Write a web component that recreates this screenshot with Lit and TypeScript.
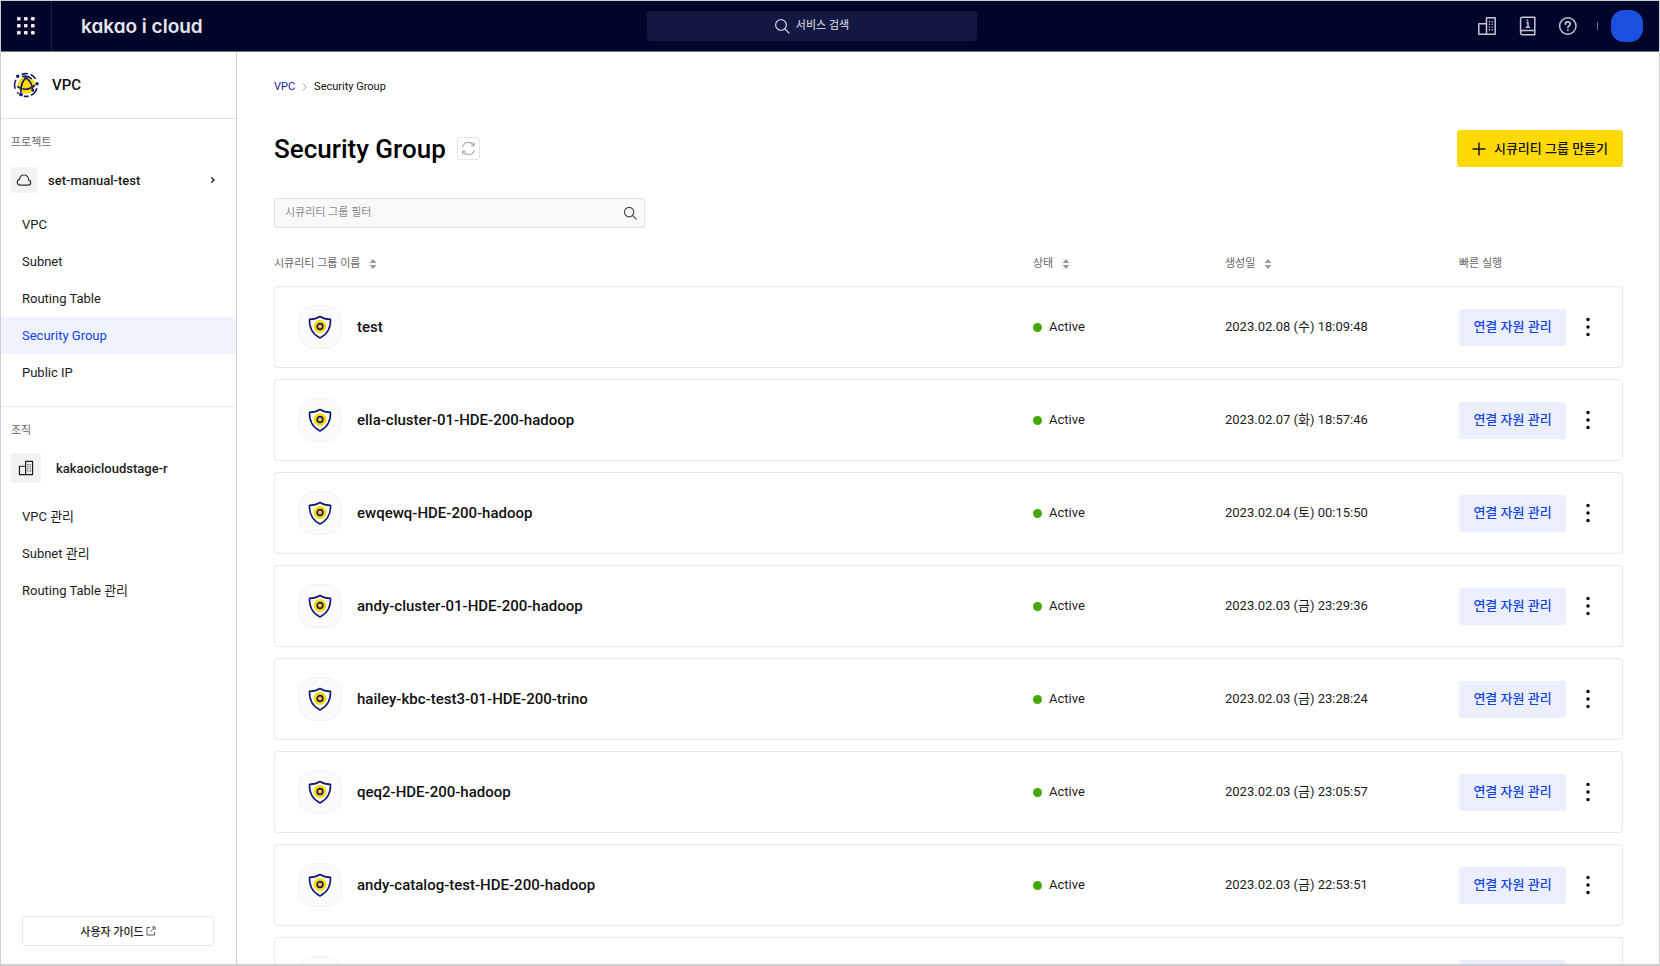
import { LitElement, html, css, svg } from "lit";
import { customElement, property } from "lit/decorators.js";
import { classMap } from "lit/directives/class-map.js";

const reset = css`
  *, *::before, *::after { box-sizing: border-box; }
  button, input { font: inherit; color: inherit; margin: 0; }
  button { border: 0; padding: 0; background: none; cursor: pointer; }
  a { color: inherit; text-decoration: none; }
  svg { display: block; flex: none; }
`;

interface SecurityGroup {
  name: string;
  created: string;
}

const groups: SecurityGroup[] = [
  { name: "test", created: "2023.02.08 (수) 18:09:48" },
  { name: "ella-cluster-01-HDE-200-hadoop", created: "2023.02.07 (화) 18:57:46" },
  { name: "ewqewq-HDE-200-hadoop", created: "2023.02.04 (토) 00:15:50" },
  { name: "andy-cluster-01-HDE-200-hadoop", created: "2023.02.03 (금) 23:29:36" },
  { name: "hailey-kbc-test3-01-HDE-200-trino", created: "2023.02.03 (금) 23:28:24" },
  { name: "qeq2-HDE-200-hadoop", created: "2023.02.03 (금) 23:05:57" },
  { name: "andy-catalog-test-HDE-200-hadoop", created: "2023.02.03 (금) 22:53:51" },
  { name: "", created: "" },
];

const searchIcon = (size: number) => html`
  <svg width=${size} height=${size} viewBox="0 0 16 16" fill="none" stroke="currentColor" stroke-width="1.3" stroke-linecap="round" aria-hidden="true">
    <circle cx="7" cy="7" r="5.4" /><path d="M11 11l4 4" />
  </svg>`;

const buildingIcon = (size: number) => html`
  <svg width=${size} height=${size} viewBox="0 0 20 20" fill="none" stroke="currentColor" stroke-width="1.5" stroke-linejoin="round" aria-hidden="true">
    <path d="M9.5 18.2V1.8h8.7v16.4zM9.5 7.8H1.8v10.4h7.7" />
    <path d="M12.4 5v9.6M15.3 5v9.6" stroke-width="1.2" stroke-dasharray="1.4 1.3" />
  </svg>`;

@customElement("top-bar")
export class TopBar extends LitElement {
  static styles = [reset, css`
    :host {
      display: flex; align-items: center; height: 51px; flex: none;
      background: #000529; border-bottom: 1px solid #77797f; color: #c3c5d3;
    }
    .brand { flex: 1; display: flex; align-items: center; align-self: stretch; }
    .apps { width: 51px; align-self: stretch; display: grid; place-items: center; border-right: 1px solid #1d2240; color: #f2f2f5; }
    .logo { margin-left: 29px; padding-top: 2px; font: 600 19px/24px Inter, sans-serif; font-feature-settings: "cv11"; color: #e6e7ee; }
    .search {
      width: 330px; height: 30px; margin-right: 21px; border-radius: 4px; background: #131842;
      display: flex; align-items: center; justify-content: center; gap: 6px; font-size: 11px; font-weight: 500; line-height: 16px;
    }
    .tools { flex: 1; display: flex; align-items: center; justify-content: flex-end; padding-right: 16px; }
    .tool { width: 20px; height: 20px; margin-right: 20px; display: grid; place-items: center; }
    .bar { width: 1px; height: 8px; margin-right: 13px; background: #71748a; }
    .avatar { width: 32px; height: 32px; border-radius: 13px; background: #1b4fdf; }
  `];

  render() {
    return html`
      <div class="brand">
        <button class="apps" aria-label="서비스 목록">
          <svg width="18" height="18" viewBox="0 0 18 18" fill="currentColor" aria-hidden="true">
            ${[0, 1, 2, 3, 4, 5, 6, 7, 8].map((i) => svg`<rect x=${(i % 3) * 7} y=${Math.floor(i / 3) * 7} width="3.6" height="3.6" rx="0.8" />`)}
          </svg>
        </button>
        <a class="logo" href="#">kakao i cloud</a>
      </div>
      <button class="search">${searchIcon(16)}<span>서비스 검색</span></button>
      <div class="tools">
        <button class="tool" aria-label="조직">${buildingIcon(20)}</button>
        <button class="tool" aria-label="문서">
          <svg width="20" height="20" viewBox="0 0 20 20" fill="none" stroke="currentColor" stroke-width="1.5" stroke-linejoin="round" aria-hidden="true">
            <path d="M17.8 14.5V1.2H5.300A1.7 1.7 0 0 0 3.600 3v14A1.7 1.7 0 0 0 5.300 18.7H17.800v-4.2H5.300A1.7 1.7 0 0 0 3.600 16" />
            <path d="M9.4 6.8h1.6v4.4M8.800 11.3h4.2M10.500 3.6v1.6" />
          </svg>
        </button>
        <button class="tool" aria-label="도움말">
          <svg width="20" height="20" viewBox="0 0 20 20" fill="none" stroke="currentColor" stroke-width="1.5" stroke-linecap="round" aria-hidden="true">
            <circle cx="10.8" cy="10" r="8.2" />
            <path d="M8.500 8.1c0-3 4.7-2.8 4.7-.2 0 1.7-2.3 1.7-2.3 3.6M10.900 14v.2" stroke-width="1.7" />
          </svg>
        </button>
        <span class="bar"></span>
        <button class="avatar" aria-label="내 계정"></button>
      </div>`;
  }
}

@customElement("side-nav")
export class SideNav extends LitElement {
  @property() current = "Security Group";

  static styles = [reset, css`
    :host {
      width: 236px; flex: none; display: flex; flex-direction: column;
      border-right: 1px solid #cfcfcf; font-size: 13px; color: #1c1c1c;
    }
    .head { display: flex; align-items: center; gap: 13px; height: 67px; padding-left: 12px; border-bottom: 1px solid #e3e3e3; font-size: 15px; font-weight: 500; color: #111; }
    .group { padding: 14px 0 15px; }
    .group + .group { border-top: 1px solid #ececec; }
    .label { margin: 0; padding-left: 10px; font-size: 11px; font-weight: 400; line-height: 20px; color: #666; }
    .scope { width: 100%; display: flex; align-items: center; gap: 11px; margin: 14px 0 13px; padding: 0 20px 0 10px; font-weight: 500; text-align: left; }
    .scope.org { gap: 15px; margin: 12px 0 15px; }
    .name { flex: 1; }
    .tile { width: 26px; height: 26px; border-radius: 3px; background: #f2f2f2; display: grid; place-items: center; }
    .org .tile { width: 30px; height: 30px; }
    .list { list-style: none; margin: 0; padding: 0; }
    .item { display: block; padding-left: 21px; line-height: 37px; }
    .item.on { background: #eef3fe; color: #1540ec; }
    .guide {
      display: flex; align-items: center; justify-content: center; gap: 2px; height: 30px; margin: auto 22px 18px 21px;
      border: 1px solid #e6e6e6; border-radius: 3px; font-size: 11px; font-weight: 500;
    }
  `];

  private menu(items: string[]) {
    return html`<ul class="list">${items.map((t) => html`
      <li><a href="#" class=${classMap({ item: true, on: t === this.current })}>${t}</a></li>`)}</ul>`;
  }

  render() {
    return html`
      <div class="head">
        <svg width="26" height="26" viewBox="0 0 26 26" fill="none" stroke="#121a70" stroke-width="1.6" aria-hidden="true">
          <circle cx="13.4" cy="13.2" r="8.6" fill="#ffd900" stroke="none" />
          <path d="M8.6 2.4A11.4 11.4 0 0 1 15 1.8M17.600 2.500a11.4 11.4 0 0 1 5 4.400M2.9 7.8a11.4 11.4 0 0 0-.7 9M4.3 20.3l1.2 1.4M10.8 24.2a11.4 11.4 0 0 0 4.8-.1M18 23.3a11.4 11.4 0 0 0 5.8-7.1" />
          <path d="M12.6 6.200C9.400 9.200 7.700 13.6 7.8 20.4M13.3 6.200c3.4 2.4 6.100 6.800 6.400 12.300M4.200 14.400c4.500 3.800 12.200 4.200 17.800-1.200M9 4.600C12.500 3.600 16 4.400 19 7" />
          <g fill="#121a70" stroke="none"><circle cx="4.7" cy="4.3" r="1.7" /><circle cx="24" cy="11.8" r="1.7" /><circle cx="8" cy="22.4" r="1.9" /><circle cx="12.9" cy="5.8" r="1.5" /><circle cx="19.8" cy="18.4" r="1.4" /></g>
        </svg>
        <span>VPC</span>
      </div>
      <section class="group">
        <h2 class="label">프로젝트</h2>
        <button class="scope">
          <span class="tile">
            <svg width="16" height="14" viewBox="0 0 16 14" fill="none" stroke="#333" stroke-width="1.2" stroke-linejoin="round" aria-hidden="true">
              <path d="M4 12.2h8.2a2.6 2.6 0 0 0 .6-5.1C12.400 4 10.400 2 8 2S3.800 3.800 3.500 6.400A2.950 2.950 0 0 0 4 12.200z" />
            </svg>
          </span>
          <span class="name">set-manual-test</span>
          <svg width="6" height="8" viewBox="0 0 6 8" fill="none" stroke="#111" stroke-width="1.2" aria-hidden="true"><path d="M1.300 1.500L4 4 1.300 6.500" /></svg>
        </button>
        ${this.menu(["VPC", "Subnet", "Routing Table", "Security Group", "Public IP"])}
      </section>
      <section class="group">
        <h2 class="label">조직</h2>
        <button class="scope org">
          <span class="tile">${buildingIcon(16)}</span>
          <span class="name">kakaoicloudstage-r</span>
        </button>
        ${this.menu(["VPC 관리", "Subnet 관리", "Routing Table 관리"])}
      </section>
      <a class="guide" href="#">
        <span>사용자 가이드</span>
        <svg width="10" height="10" viewBox="0 0 10 10" fill="none" stroke="#555" stroke-width="1" aria-hidden="true">
          <path d="M4 1.500H1v7.500h7.500V6M5.800 1H9v3.200M9 1L4.500 5.500" />
        </svg>
      </a>`;
  }
}

@customElement("group-table")
export class GroupTable extends LitElement {
  @property({ attribute: false }) rows: SecurityGroup[] = [];

  static styles = [reset, css`
    :host { display: block; }
    .table { width: 100%; table-layout: fixed; border-collapse: separate; border-spacing: 0 11px; text-align: left; font-size: 13px; }
    .status { width: 192px; }
    .created { width: 234px; }
    .quick { width: 164px; }
    th { height: 26px; padding: 0; font-size: 11px; font-weight: 400; color: #666; }
    .sort { display: flex; align-items: center; gap: 9px; }
    .sort svg { margin-top: 4px; }
    td { height: 82px; padding: 0; border: solid #e9e9e9; border-width: 1px 0; line-height: 16px; color: #1c1c1c; }
    td:first-child { border-left-width: 1px; border-radius: 4px 0 0 4px; padding-left: 23px; }
    td:last-child { border-right-width: 1px; border-radius: 0 4px 4px 0; }
    .cell { display: flex; align-items: center; }
    .badge { width: 44px; height: 44px; margin-right: 15px; border: 1px solid #f2f2f2; border-radius: 17px; background: #fafafa; display: grid; place-items: center; }
    .title { font-size: 15px; font-weight: 500; color: #111; }
    .dot { width: 9px; height: 9px; margin-right: 7px; border-radius: 50%; background: #44a80c; }
    .manage { width: 107px; height: 37px; border-radius: 3px; background: #ebeffd; color: #1545e0; font-weight: 500; }
    .more { width: 22px; height: 28px; margin-left: 11px; display: grid; place-items: center; color: #000; }
  `];

  private heading(text: string) {
    return html`<button class="sort"><span>${text}</span>
      <svg width="8" height="10" viewBox="0 0 8 10" fill="#999" aria-hidden="true"><path d="M4 0l3.500 4h-7zM4 10L.500 6h7z" /></svg>
    </button>`;
  }

  render() {
    return html`
      <table class="table">
        <thead>
          <tr>
            <th scope="col">${this.heading("시큐리티 그룹 이름")}</th>
            <th scope="col" class="status">${this.heading("상태")}</th>
            <th scope="col" class="created">${this.heading("생성일")}</th>
            <th scope="col" class="quick">빠른 실행</th>
          </tr>
        </thead>
        <tbody>
          ${this.rows.map((r) => html`
            <tr>
              <td>
                <div class="cell">
                  <span class="badge">
                    <svg width="24" height="24" viewBox="0 0 24 24" fill="none" aria-hidden="true">
                      <circle cx="12" cy="11.500" r="6.400" fill="#ffd900" />
                      <path d="M12 1.500C9 3.500 5.500 4.300 1.500 4.400c-.3 8.600 2.500 14.600 10.500 18.600 8-4 10.800-10 10.500-18.600C18.500 4.300 15 3.500 12 1.500z" stroke="#121a70" stroke-width="1.600" stroke-linejoin="round" />
                      <circle cx="12" cy="11.500" r="2.800" stroke="#121a70" stroke-width="1.700" />
                    </svg>
                  </span>
                  <span class="title">${r.name}</span>
                </div>
              </td>
              <td>${r.name ? html`<div class="cell"><span class="dot"></span>Active</div>` : ""}</td>
              <td>${r.created}</td>
              <td>
                <div class="cell">
                  <button class="manage">${r.name ? "연결 자원 관리" : ""}</button>
                  <button class="more" aria-label="더 보기">
                    <svg width="4" height="20" viewBox="0 0 4 20" fill="currentColor" aria-hidden="true">
                      <circle cx="2" cy="2.500" r="1.700" /><circle cx="2" cy="10" r="1.700" /><circle cx="2" cy="17.500" r="1.700" />
                    </svg>
                  </button>
                </div>
              </td>
            </tr>`)}
        </tbody>
      </table>`;
  }
}

@customElement("app-root")
export class AppRoot extends LitElement {
  static styles = [reset, css`
    :host {
      display: flex; flex-direction: column; box-sizing: border-box; height: 100vh; overflow: hidden;
      border: 1px solid #cfcfcf; border-bottom-width: 2px; background: #fff;
      font-family: Roboto, "Noto Sans CJK KR", sans-serif; color: #111;
    }
    .body { flex: 1; min-height: 0; display: flex; }
    .main { flex: 1; min-width: 0; overflow: hidden; padding: 25px 36px 0 37px; }
    .crumbs { display: flex; align-items: center; gap: 7px; font-size: 11px; line-height: 20px; }
    .up { color: #1c1c9c; }
    .bar { display: flex; align-items: center; height: 37px; margin: 33px 0 31px; }
    .heading { margin: 0 11px 0 0; font-size: 26px; font-weight: 500; line-height: 36px; color: #000; }
    .refresh { width: 23px; height: 23px; border: 1px solid #e6e6e6; border-radius: 3px; display: grid; place-items: center; color: #aaa; }
    .create { display: flex; align-items: center; justify-content: center; gap: 8px; width: 166px; height: 37px; margin-left: auto; border-radius: 3px; background: #ffd900; font-size: 13px; font-weight: 500; line-height: 16px; }
    .filter { display: flex; align-items: center; width: 371px; height: 30px; padding: 0 7px 0 10px; border: 1px solid #dbe1e8; border-radius: 3px; background: #f8f9fb; color: #444; }
    .field { flex: 1; min-width: 0; padding: 0; border: 0; outline: 0; background: none; font-size: 11px; line-height: 16px; }
    .field::placeholder { color: #8c8c8c; opacity: 1; }
    .list { margin-top: 10px; }
  `];

  render() {
    return html`
      <top-bar></top-bar>
      <div class="body">
        <side-nav></side-nav>
        <main class="main">
          <nav class="crumbs" aria-label="현재 위치">
            <a class="up" href="#">VPC</a>
            <svg width="5" height="8" viewBox="0 0 5 8" fill="none" stroke="#aaa" aria-hidden="true"><path d="M1 .500L4 4 1 7.500" /></svg>
            <span>Security Group</span>
          </nav>
          <div class="bar">
            <h1 class="heading">Security Group</h1>
            <button class="refresh" aria-label="새로 고침">
              <svg width="15" height="15" viewBox="0 0 15 15" fill="none" stroke="currentColor" stroke-width="1.100" aria-hidden="true">
                <path d="M1.600 6.200a6 6 0 0 1 11-1.900M13.400 8.800a6 6 0 0 1-11 1.900M13.300 1.500v3.300H10M1.700 13.500v-3.300H5" />
              </svg>
            </button>
            <button class="create">
              <svg width="14" height="14" viewBox="0 0 14 14" stroke="#111" stroke-width="1.400" aria-hidden="true"><path d="M7 .500v13M.500 7h13" /></svg>
              <span>시큐리티 그룹 만들기</span>
            </button>
          </div>
          <label class="filter">
            <input class="field" type="text" placeholder="시큐리티 그룹 필터" aria-label="시큐리티 그룹 필터" />
            ${searchIcon(14)}
          </label>
          <group-table class="list" .rows=${groups}></group-table>
        </main>
      </div>`;
  }
}
